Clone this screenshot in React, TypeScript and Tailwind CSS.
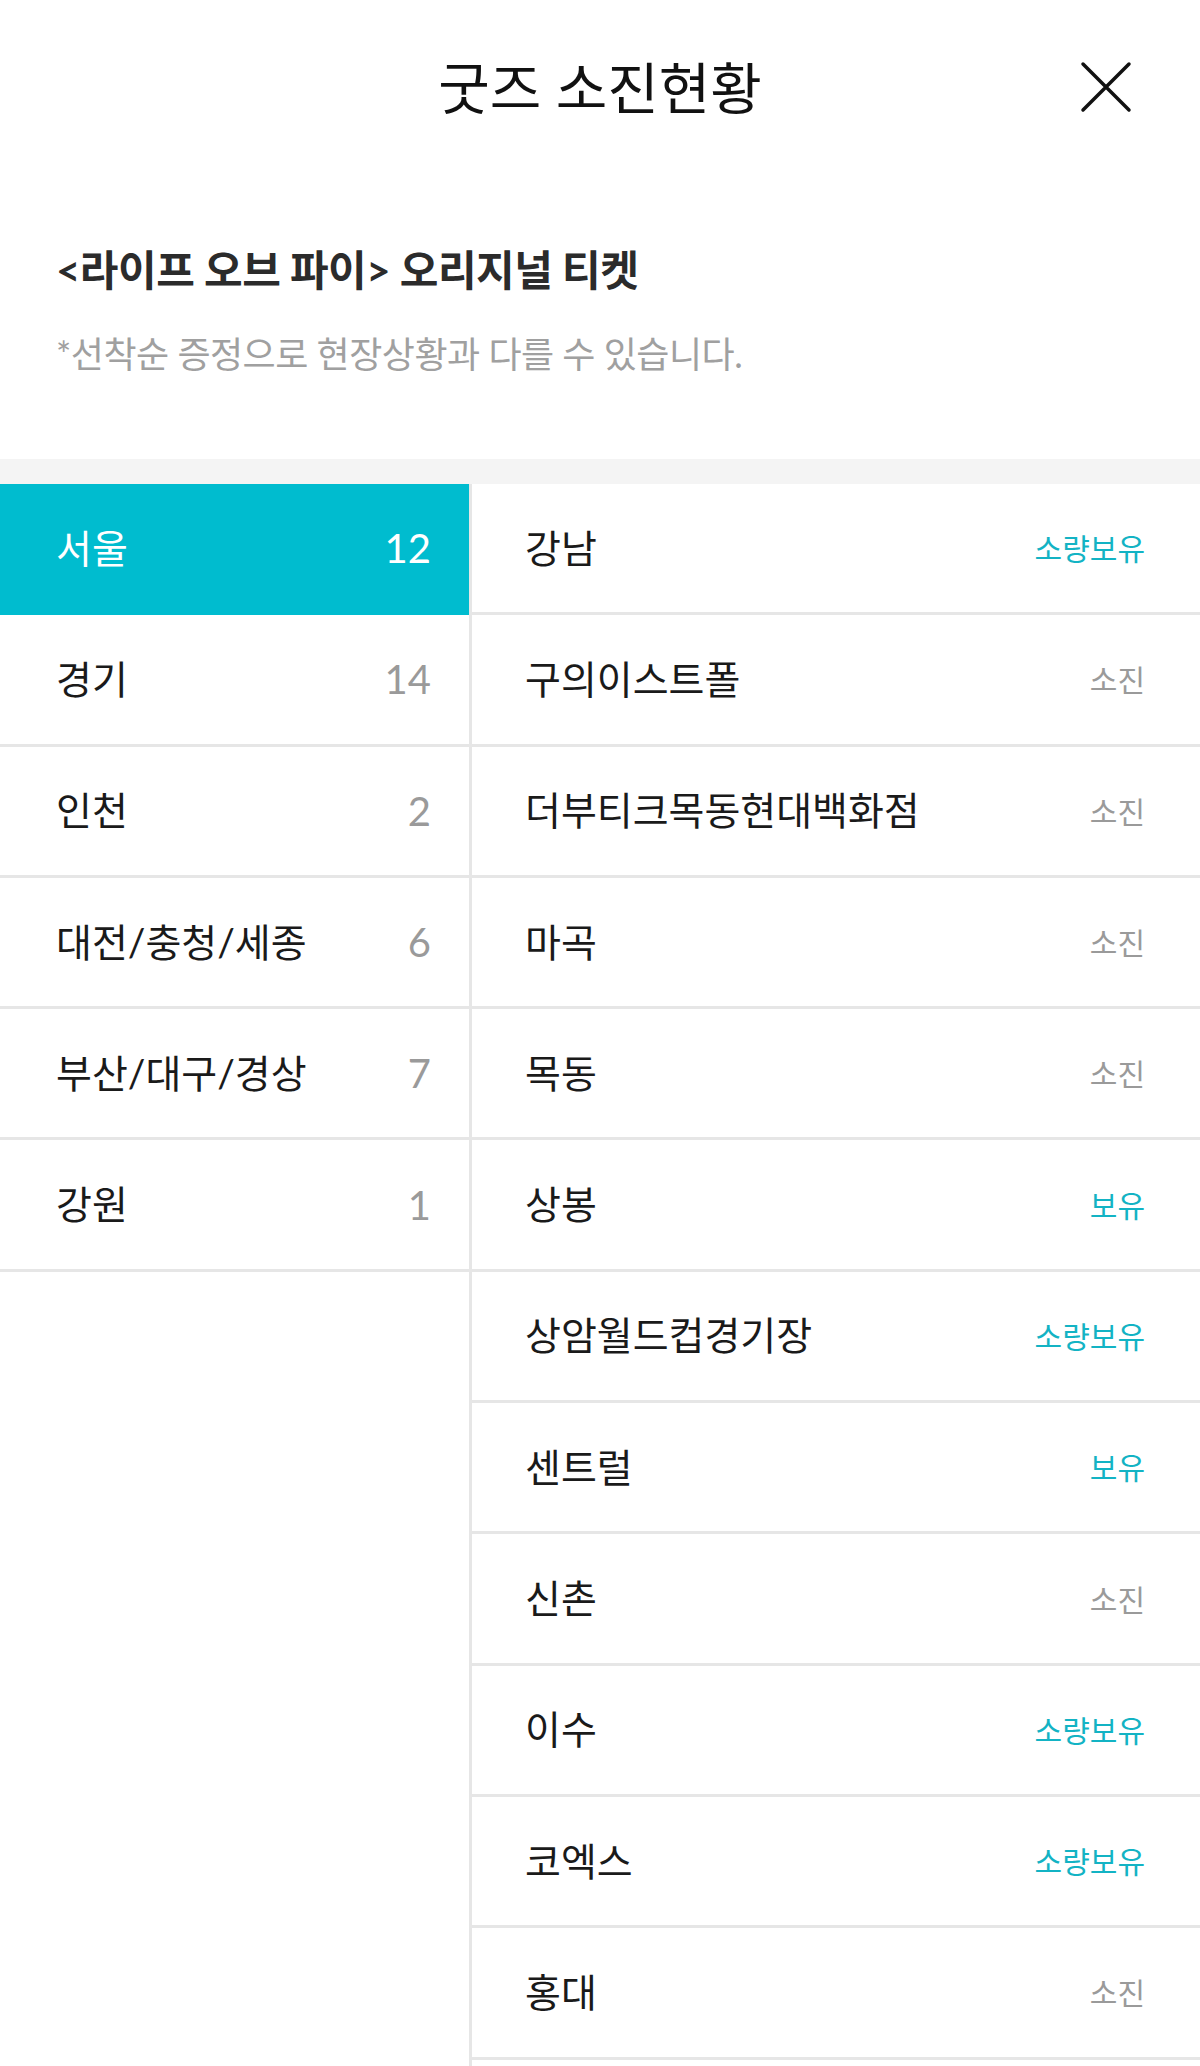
import React from 'react';

const regions = [
  { name: '서울', count: 12 },
  { name: '경기', count: 14 },
  { name: '인천', count: 2 },
  { name: '대전/충청/세종', count: 6 },
  { name: '부산/대구/경상', count: 7 },
  { name: '강원', count: 1 },
];

const stores = [
  { name: '강남', status: '소량보유' },
  { name: '구의이스트폴', status: '소진' },
  { name: '더부티크목동현대백화점', status: '소진' },
  { name: '마곡', status: '소진' },
  { name: '목동', status: '소진' },
  { name: '상봉', status: '보유' },
  { name: '상암월드컵경기장', status: '소량보유' },
  { name: '센트럴', status: '보유' },
  { name: '신촌', status: '소진' },
  { name: '이수', status: '소량보유' },
  { name: '코엑스', status: '소량보유' },
  { name: '홍대', status: '소진' },
];

export default function App() {
  const active = 0;

  return (
    <div className="min-h-screen bg-white font-['Lato','Noto_Sans_CJK_KR',sans-serif]">
      {/* Header */}
      <header className="relative h-[176px] flex items-center justify-center">
        <h1 className="text-[56px] leading-none text-[#111]">굿즈 소진현황</h1>
        <button className="absolute right-[68px] top-[61px] w-[52px] h-[52px] flex items-center justify-center">
          <svg className="w-[52px] h-[52px]" viewBox="0 0 52 52" fill="none" stroke="#111" strokeWidth="3.5" strokeLinecap="round">
            <path d="M3 3L49 49M49 3L3 49" />
          </svg>
        </button>
      </header>

      {/* Goods info */}
      <section className="pl-[56px] pt-[64px] pb-[80px]">
        <h2 className="text-[42px] leading-[60px] font-bold text-[#2b2b2b] tracking-[-0.5px]">
          &lt;라이프 오브 파이&gt; 오리지널 티켓
        </h2>
        <p className="mt-[29px] text-[36px] leading-[50px] text-[#a0a0a0] tracking-[-0.5px]">
          *선착순 증정으로 현장상황과 다를 수 있습니다.
        </p>
      </section>

      <div className="h-[25px] bg-[#f4f4f4]" />

      {/* Region / store list */}
      <div className="flex min-h-[1583px]">
        <ul className="w-[472px] shrink-0 border-r-[3px] border-[#e6e6e6]">
          {regions.map((r, i) => (
            <li
              key={r.name}
              className={
                i === active
                  ? 'h-[131.3px] flex items-center justify-between pl-[56px] pr-[38px] bg-[#00bccf] border-b-[3px] border-[#00bccf] text-white'
                  : 'h-[131.3px] flex items-center justify-between pl-[56px] pr-[38px] border-b-[3px] border-[#e6e6e6] text-[#1a1a1a]'
              }
            >
              <span className="text-[39px] leading-none">{r.name}</span>
              <span className={i === active ? 'text-[40px] leading-none text-white' : 'text-[40px] leading-none text-[#9a9a9a]'}>
                {r.count}
              </span>
            </li>
          ))}
        </ul>

        <ul className="flex-1">
          {stores.map((s) => (
            <li
              key={s.name}
              className="h-[131.3px] flex items-center justify-between pl-[53px] pr-[55px] border-b-[3px] border-[#e6e6e6]"
            >
              <span className="text-[39px] leading-none text-[#1a1a1a]">{s.name}</span>
              <span className={s.status === '소진' ? 'text-[30px] leading-none text-[#9a9a9a]' : 'text-[30px] leading-none text-[#13b3c4]'}>
                {s.status}
              </span>
            </li>
          ))}
        </ul>
      </div>
    </div>
  );
}
